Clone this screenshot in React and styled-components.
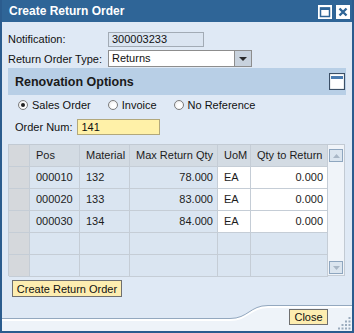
import React from 'react';
import styled, { createGlobalStyle } from 'styled-components';

const Global = createGlobalStyle`
  html, body { margin: 0; padding: 0; background: #ffffff; }
  body { font-family: "Liberation Sans", Arial, sans-serif; font-size: 11px; color: #111; }
`;

const Window = styled.div`
  width: 354px;
  height: 333px;
  box-sizing: border-box;
  display: flex;
  flex-direction: column;
  background: #dfe9f5;
  border: 2px solid #2b5c8e;
  border-top: none;
  overflow: hidden;
`;

const TitleBar = styled.div`
  height: 22px;
  margin: 0 -2px;
  display: flex;
  align-items: center;
  justify-content: space-between;
  padding: 0 4px 0 9px;
  background: #2f6597;
  color: #fff;
  font-weight: bold;
  font-size: 12px;
  flex-shrink: 0;
`;

const TitleIcons = styled.div`
  display: flex;
  gap: 4px;
  margin-top: 1px;
`;

const Body = styled.div`
  flex: 1;
  padding: 9px 6px 0 6px;
  display: flex;
  flex-direction: column;
`;

const FieldRow = styled.div`
  display: flex;
  align-items: center;
  height: ${p => p.$h || 16}px;
  margin-bottom: ${p => p.$mb || 0}px;
`;

const Label = styled.div`
  width: ${p => p.$w}px;
  white-space: nowrap;
`;

const ReadOnlyInput = styled.div`
  width: 96px;
  height: 15px;
  box-sizing: border-box;
  background: #dbe5f1;
  border: 1px solid #a2abb5;
  padding-left: 3px;
  line-height: 13px;
`;

const Select = styled.div`
  width: 144px;
  height: 17px;
  box-sizing: border-box;
  display: flex;
  background: #fff;
  border: 1px solid #8d8d8d;
`;

const SelectText = styled.div`
  flex: 1;
  padding-left: 3px;
  line-height: 15px;
`;

const SelectButton = styled.div`
  width: 16px;
  background: #c8d2dd;
  border-left: 1px solid #8d8d8d;
  display: flex;
  align-items: center;
  justify-content: center;
`;

const Panel = styled.div`
  margin-top: 1px;
  display: flex;
  flex-direction: column;
`;

const PanelHeader = styled.div`
  height: 27px;
  display: flex;
  align-items: center;
  justify-content: space-between;
  padding: 0 1px 0 7px;
  background: #b8cfe6;
  font-weight: bold;
  font-size: 12.5px;
  color: #1a1a1a;
`;

const RadioRow = styled.div`
  display: flex;
  align-items: center;
  height: 12px;
  margin-top: 4px;
  padding-left: 10px;
`;

const RadioItem = styled.label`
  display: flex;
  align-items: center;
  gap: 4px;
  margin-right: 17px;
`;

const RadioCircle = styled.span`
  width: 10px;
  height: 10px;
  box-sizing: border-box;
  border-radius: 50%;
  border: 1px solid #7c7c7c;
  background: radial-gradient(circle at 60% 60%, #ffffff 30%, #e2e2e2 100%);
  display: flex;
  align-items: center;
  justify-content: center;
  &::after {
    content: '';
    width: 4px;
    height: 4px;
    border-radius: 50%;
    background: ${p => (p.$on ? '#222' : 'transparent')};
  }
`;

const OrderRow = styled.div`
  display: flex;
  align-items: center;
  height: 16px;
  margin-top: 8px;
  padding-left: 7px;
  gap: 5px;
`;

const YellowInput = styled.div`
  width: 83px;
  height: 16px;
  box-sizing: border-box;
  background: #fff1a8;
  border: 1px solid #b2a87c;
  padding-left: 3px;
  line-height: 14px;
`;

const TableWrap = styled.div`
  margin-top: 9px;
  width: 337px;
  height: 132px;
  display: flex;
`;

const Grid = styled.div`
  display: grid;
  grid-template-columns: 21px 50px 50px 88px 33px 77px;
  grid-auto-rows: 22px;
  border-left: 1px solid #c2cad3;
  border-top: 1px solid #c2cad3;
  box-sizing: border-box;
  height: 132px;
`;

const Cell = styled.div`
  box-sizing: border-box;
  border-right: 1px solid #c5cdd6;
  border-bottom: 1px solid #c5cdd6;
  background: ${p => p.$bg};
  text-align: ${p => (p.$right ? 'right' : 'left')};
  padding: ${p => (p.$right ? '0 4px 0 0' : '0 0 0 6px')};
  line-height: 21px;
  white-space: nowrap;
  overflow: hidden;
  color: #1c1c1c;
`;

const ScrollBar = styled.div`
  flex: 1;
  box-sizing: border-box;
  background: #f0f4f9;
  border-top: 1px solid #c2cad3;
  border-right: 1px solid #c2cad3;
  border-bottom: 1px solid #c5cdd6;
  display: flex;
  flex-direction: column;
  justify-content: space-between;
  padding: 4px 1px 0 1px;
`;

const ScrollBtn = styled.div`
  width: 14px;
  height: 13px;
  box-sizing: border-box;
  border: 1px solid #8ea6bf;
  background: #dbe5ef;
  display: flex;
  align-items: center;
  justify-content: center;
  margin-bottom: ${p => p.$mb || 0}px;
`;

const Button = styled.button`
  font-family: inherit;
  font-size: 11px;
  color: #111;
  background: #fdedb0;
  border: 1px solid #6f6f6f;
  border-radius: 0;
  padding: 0;
  height: ${p => p.$h}px;
  width: ${p => p.$w}px;
  line-height: 14px;
  cursor: pointer;
`;

const ActionRow = styled.div`
  margin-top: 4px;
  padding-left: 4px;
`;

const Footer = styled.div`
  position: relative;
  height: 28px;
  flex-shrink: 0;
  display: flex;
  justify-content: flex-end;
  align-items: flex-start;
  padding: 6px 24px 0 0;
  box-sizing: border-box;
`;

const FooterCurve = styled.svg`
  position: absolute;
  left: 0;
  top: 0;
  width: 350px;
  height: 28px;
`;

const FooterContent = styled.div`
  position: relative;
`;

const Grip = styled.svg`
  position: absolute;
  right: 1px;
  bottom: 1px;
`;

const C = { head: '#d3dbe3', sel: '#d5d8dc', cell: '#dae5f1', white: '#ffffff' };

const rows = [
  { pos: '000010', mat: '132', max: '78.000', uom: 'EA', qty: '0.000' },
  { pos: '000020', mat: '133', max: '83.000', uom: 'EA', qty: '0.000' },
  { pos: '000030', mat: '134', max: '84.000', uom: 'EA', qty: '0.000' },
  null,
  null,
];

function MaxIcon() {
  return (
    <svg width="14" height="14" viewBox="0 0 14 14">
      <rect x="0" y="0" width="14" height="14" fill="#fff" />
      <rect x="2.5" y="3" width="9" height="8.5" fill="none" stroke="#2f6597" strokeWidth="1.5" />
      <rect x="2" y="2.5" width="10" height="2.5" fill="#2f6597" />
    </svg>
  );
}

function CloseIcon() {
  return (
    <svg width="14" height="14" viewBox="0 0 14 14">
      <rect x="0" y="0" width="14" height="14" fill="#fff" />
      <path d="M3.5 3.5 L10.5 10.5 M10.5 3.5 L3.5 10.5" stroke="#2f6597" strokeWidth="2.4" />
    </svg>
  );
}

function MinIcon() {
  return (
    <svg width="16" height="17" viewBox="0 0 16 17">
      <rect x="0.5" y="0.5" width="15" height="16" fill="#fff" stroke="#3b4f66" strokeWidth="1.2" />
      <rect x="2" y="3" width="12" height="3" fill="#4a7bb0" />
    </svg>
  );
}

function Arrow({ color = '#333', up = false, w = 8, h = 4 }) {
  return (
    <svg width={w} height={h} viewBox={`0 0 ${w} ${h}`}>
      <path d={up ? `M0 ${h} L${w / 2} 0 L${w} ${h} Z` : `M0 0 L${w} 0 L${w / 2} ${h} Z`} fill={color} />
    </svg>
  );
}

export default function App() {
  return (
    <>
      <Global />
      <Window>
        <TitleBar>
          <span>Create Return Order</span>
          <TitleIcons>
            <MaxIcon />
            <CloseIcon />
          </TitleIcons>
        </TitleBar>
        <Body>
          <FieldRow $mb={3}>
            <Label $w={100}>Notification:</Label>
            <ReadOnlyInput>300003233</ReadOnlyInput>
          </FieldRow>
          <FieldRow $h={17}>
            <Label $w={100}>Return Order Type:</Label>
            <Select>
              <SelectText>Returns</SelectText>
              <SelectButton>
                <Arrow color="#2a2a2a" w={8} h={4} />
              </SelectButton>
            </Select>
          </FieldRow>
          <Panel>
            <PanelHeader>
              <span>Renovation Options</span>
              <MinIcon />
            </PanelHeader>
            <RadioRow>
              <RadioItem>
                <RadioCircle $on />
                Sales Order
              </RadioItem>
              <RadioItem>
                <RadioCircle />
                Invoice
              </RadioItem>
              <RadioItem>
                <RadioCircle />
                No Reference
              </RadioItem>
            </RadioRow>
            <OrderRow>
              <span>Order Num:</span>
              <YellowInput>141</YellowInput>
            </OrderRow>
          </Panel>
          <TableWrap>
            <Grid>
              <Cell $bg={C.sel} />
              <Cell $bg={C.head}>Pos</Cell>
              <Cell $bg={C.head}>Material</Cell>
              <Cell $bg={C.head}>Max Return Qty</Cell>
              <Cell $bg={C.head}>UoM</Cell>
              <Cell $bg={C.head}>Qty to Return</Cell>
              {rows.map((r, i) => (
                <React.Fragment key={i}>
                  <Cell $bg={C.sel} />
                  <Cell $bg={C.cell}>{r && r.pos}</Cell>
                  <Cell $bg={C.cell}>{r && r.mat}</Cell>
                  <Cell $bg={C.cell} $right>{r && r.max}</Cell>
                  <Cell $bg={r ? C.white : C.cell}>{r && r.uom}</Cell>
                  <Cell $bg={r ? C.white : C.cell} $right>{r && r.qty}</Cell>
                </React.Fragment>
              ))}
            </Grid>
            <ScrollBar>
              <ScrollBtn>
                <Arrow color="#a9b7c6" up w={7} h={4} />
              </ScrollBtn>
              <ScrollBtn $mb={1}>
                <Arrow color="#a9b7c6" w={7} h={4} />
              </ScrollBtn>
            </ScrollBar>
          </TableWrap>
          <ActionRow>
            <Button $w={110} $h={17}>Create Return Order</Button>
          </ActionRow>
        </Body>
        <Footer>
          <FooterCurve viewBox="0 0 350 28" preserveAspectRatio="none">
            <path d="M0 15.5 L228 15.5 C246 15.5 248 2.5 266 2.5 L350 2.5 L350 28 L0 28 Z" fill="#eef3f9" />
            <path d="M0 17 L228 17 C246 17 248 4 266 4 L350 4" fill="none" stroke="#ffffff" strokeWidth="2" />
            <path d="M0 15.5 L228 15.5 C246 15.5 248 2.5 266 2.5 L350 2.5" fill="none" stroke="#93a8bf" strokeWidth="1" />
          </FooterCurve>
          <FooterContent>
            <Button $w={39} $h={16}>Close</Button>
          </FooterContent>
          <Grip width="14" height="14" viewBox="0 0 14 14">
            {[0, 1, 2, 3].flatMap(i =>
              [0, 1, 2, 3].map(j =>
                i + j >= 3 ? (
                  <rect key={`${i}-${j}`} x={1 + j * 3.5} y={1 + i * 3.5} width="2" height="2" fill="#9aabbd" />
                ) : null
              )
            )}
          </Grip>
        </Footer>
      </Window>
    </>
  );
}
